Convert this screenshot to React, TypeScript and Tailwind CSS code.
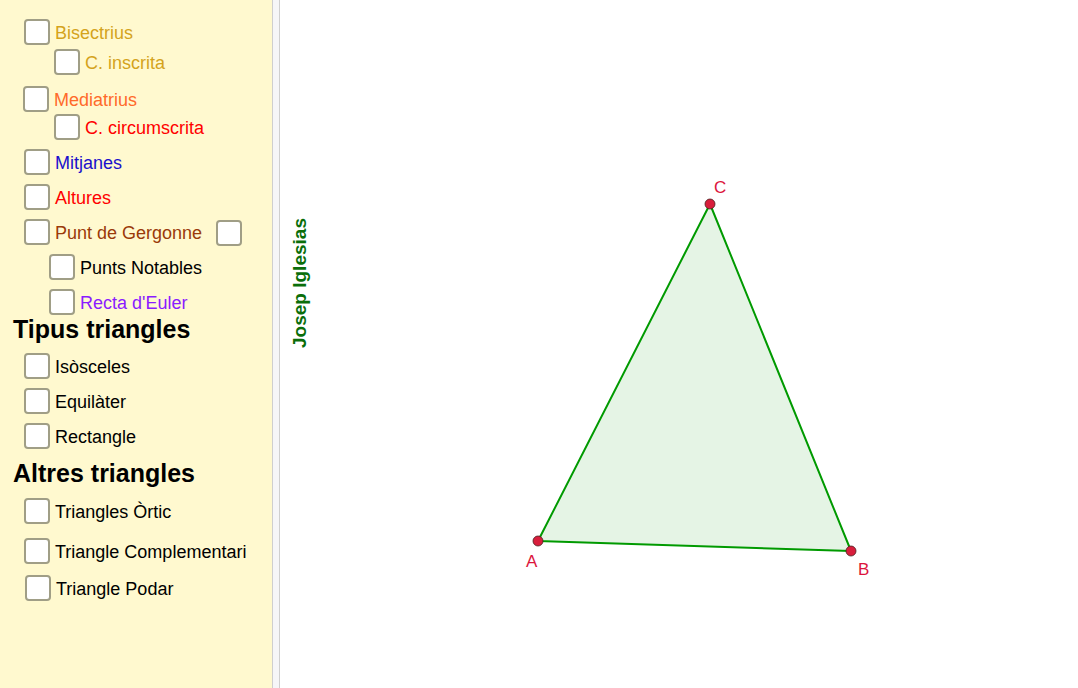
import React from "react";

type Item = {
  label: string;
  color: string;
  row: string; // spacing classes for the row
  extra?: boolean;
};

const items: Item[] = [
  { label: "Bisectrius", color: "text-[#d4a31c]", row: "mt-[19px] ml-[24px]" },
  { label: "C. inscrita", color: "text-[#d4a31c]", row: "mt-[4px] ml-[54px]" },
  { label: "Mediatrius", color: "text-[#ff6a2a]", row: "mt-[11px] ml-[23px]" },
  { label: "C. circumscrita", color: "text-[#ff0000]", row: "mt-[2px] ml-[54px]" },
  { label: "Mitjanes", color: "text-[#1a10cc]", row: "mt-[9px] ml-[24px]" },
  { label: "Altures", color: "text-[#ff0000]", row: "mt-[9px] ml-[24px]" },
  { label: "Punt de Gergonne", color: "text-[#9a3a0a]", row: "mt-[9px] ml-[24px]", extra: true },
  { label: "Punts Notables", color: "text-black", row: "mt-[9px] ml-[49px]" },
  { label: "Recta d'Euler", color: "text-[#8a1cff]", row: "mt-[9px] ml-[49px]" },
];

const tipus: Item[] = [
  { label: "Isòsceles", color: "text-black", row: "mt-[11px] ml-[24px]" },
  { label: "Equilàter", color: "text-black", row: "mt-[9px] ml-[24px]" },
  { label: "Rectangle", color: "text-black", row: "mt-[9px] ml-[24px]" },
];

const altres: Item[] = [
  { label: "Triangles Òrtic", color: "text-black", row: "mt-[12px] ml-[24px]" },
  { label: "Triangle Complementari", color: "text-black", row: "mt-[14px] ml-[24px]" },
  { label: "Triangle Podar", color: "text-black", row: "mt-[11px] ml-[25px]" },
];

function Box() {
  return (
    <span className="block w-[26px] h-[26px] flex-shrink-0 rounded-[4px] border-2 border-[#a09e86] bg-white" />
  );
}

function Row({ item }: { item: Item }) {
  return (
    <div className={`flex items-center h-[26px] ${item.row}`}>
      <Box />
      <span className={`ml-[5px] mt-[1px] text-[18px] leading-none whitespace-nowrap ${item.color}`}>
        {item.label}
      </span>
      {item.extra && (
        <span className="ml-[14px] mt-[2px] flex">
          <Box />
        </span>
      )}
    </div>
  );
}

function Heading({ children, className }: { children: React.ReactNode; className: string }) {
  return (
    <div className={`ml-[13px] h-[25px] text-[25px] font-bold leading-none text-black ${className}`}>
      {children}
    </div>
  );
}

function Triangle() {
  const A = [538, 541];
  const B = [851, 551];
  const C = [710, 204];
  const pts = `${A.join(",")} ${B.join(",")} ${C.join(",")}`;
  return (
    <svg width="1078" height="688" className="absolute left-[-280px] top-0 pointer-events-none">
      <polygon points={pts} fill="#e5f4e5" stroke="#009a00" strokeWidth="2" strokeLinejoin="round" />
      {[A, B, C].map((p, i) => (
        <circle key={i} cx={p[0]} cy={p[1]} r="5" fill="#d81e3c" stroke="#4a2020" strokeWidth="0.8" />
      ))}
      <g fill="#dc143c" fontFamily="'Liberation Sans', Arial, sans-serif" fontSize="17">
        <text x="526" y="567">A</text>
        <text x="858" y="575">B</text>
        <text x="714" y="193">C</text>
      </g>
    </svg>
  );
}

export default function App() {
  return (
    <div
      className="flex w-[1078px] h-[688px] overflow-hidden bg-white"
      style={{ fontFamily: "'Liberation Sans', Arial, sans-serif" }}
    >
      {/* Control panel */}
      <div className="w-[272px] h-full flex-shrink-0 flex flex-col bg-[#fff9cf]">
        {items.map((it) => (
          <Row key={it.label} item={it} />
        ))}
        <Heading className="mt-[2px]">Tipus triangles</Heading>
        {tipus.map((it) => (
          <Row key={it.label} item={it} />
        ))}
        <Heading className="mt-[12px]">Altres triangles</Heading>
        {altres.map((it) => (
          <Row key={it.label} item={it} />
        ))}
      </div>

      {/* Splitter */}
      <div className="w-[8px] h-full flex-shrink-0 border-x border-[#cfcfcf] bg-[#f6f6f8]" />

      {/* Graphics view */}
      <div className="relative flex-1 h-full">
        <div className="absolute left-[20px] top-[283px] -translate-x-1/2 -translate-y-1/2 -rotate-90 whitespace-nowrap text-[19px] font-bold text-[#0a6e0a]">
          Josep Iglesias
        </div>
        <Triangle />
      </div>
    </div>
  );
}
